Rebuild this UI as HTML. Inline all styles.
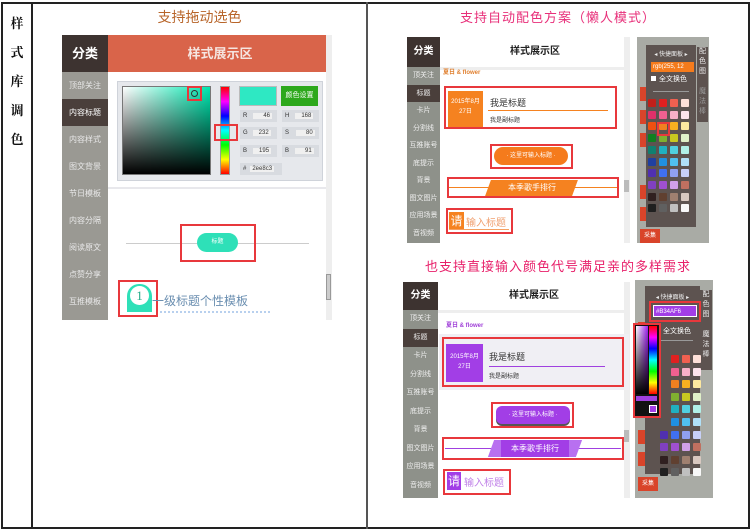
<!DOCTYPE html>
<html><head><meta charset="utf-8"><style>
*{margin:0;padding:0;box-sizing:border-box}
body{width:750px;height:530px;background:#fff;position:relative;overflow:hidden;font-family:"Liberation Sans","Noto Sans CJK SC",sans-serif;font-size:9px;color:#333}
.a{position:absolute}
.rb{position:absolute;border:2px solid #e8383c}
.side div{height:17.5px;line-height:17.5px;text-align:center;color:#eee;font-size:7px}
.g{position:absolute;width:8px;height:8px;border-radius:1px}
</style></head><body>
<!-- table borders -->
<div class="a" style="left:1px;top:2px;width:749px;height:527px;border:2px solid #222"></div>
<div class="a" style="left:31px;top:2px;width:2px;height:527px;background:#222"></div>
<div class="a" style="left:366px;top:2px;width:2px;height:527px;background:#555"></div>
<div class="a" style="left:9px;top:8px;width:16px;font-size:13px;font-weight:bold;line-height:29px;text-align:center;font-family:'Noto Serif CJK SC',serif;color:#111">样<br>式<br>库<br>调<br>色</div>

<div class="a" style="left:33px;top:7px;width:333px;text-align:center;font-size:14px;color:#b8652a">支持拖动选色</div>
<div class="a" style="left:368px;top:7px;width:380px;text-align:center;font-size:13px;color:#e8307a;letter-spacing:1px">支持自动配色方案（懒人模式）</div>
<div class="a" style="left:368px;top:256px;width:380px;text-align:center;font-size:13px;color:#e8206a;letter-spacing:1px">也支持直接输入颜色代号满足亲的多样需求</div>

<!-- LEFT SCREEN -->
<div class="a" style="left:62px;top:35px;width:270px;height:285px;background:#fff;overflow:hidden">
 <div class="a" style="left:0;top:0;width:46px;height:37px;background:#3d3330;color:#fff;font-size:13px;font-weight:bold;text-align:center;line-height:37px">分类</div>
 <div class="a" style="left:46px;top:0;width:224px;height:37px;background:#d9644a;color:#fbe;font-size:13px;font-weight:bold;text-align:center;line-height:37px;color:#f5e5e0">样式展示区</div>
 <div class="a" style="left:0;top:37px;width:46px;height:248px;background:#9a9993"></div>
 <div class="a" style="left:0;top:37px;width:46px;font-size:8px;color:#e8e8e8">
  <div style="height:27px;line-height:27px;text-align:center">顶部关注</div>
  <div style="height:27px;line-height:27px;text-align:center;background:#4a3f3b;color:#fff">内容标题</div>
  <div style="height:27px;line-height:27px;text-align:center">内容样式</div>
  <div style="height:27px;line-height:27px;text-align:center">图文背景</div>
  <div style="height:27px;line-height:27px;text-align:center">节日模板</div>
  <div style="height:27px;line-height:27px;text-align:center">内容分隔</div>
  <div style="height:27px;line-height:27px;text-align:center">阅读原文</div>
  <div style="height:27px;line-height:27px;text-align:center">点赞分享</div>
  <div style="height:27px;line-height:27px;text-align:center">互推模板</div>
 </div>
 <div class="a" style="left:55px;top:46px;width:206px;height:100px;background:#e6e8ec;border:1px solid #cfd3da"></div>
 <div class="a" style="left:60px;top:51px;width:89px;height:89px;background:linear-gradient(to top,#000,rgba(0,0,0,0)),linear-gradient(to right,#fff,#00e8b0);border:1px solid #777"></div>
 <div class="rb" style="left:125px;top:51px;width:15px;height:15px"></div>
 <div class="a" style="left:129px;top:55px;width:7px;height:7px;border:1px solid #333;border-radius:50%"></div>
 <div class="a" style="left:158px;top:51px;width:10px;height:89px;background:linear-gradient(#f00,#f0f,#00f,#0ff,#0f0,#ff0,#f00);border:1px solid #999"></div>
 <div class="rb" style="left:152px;top:89px;width:24px;height:17px"></div>
 <div class="a" style="left:177px;top:51px;width:38px;height:20px;background:#2ee8c3;border:1px solid #bbb"></div>
 <div class="a" style="left:219px;top:51px;width:37px;height:20px;background:#2da81c;color:#fff;font-size:7px;text-align:center;line-height:20px">颜色设置</div>
 <div class="a" style="left:178px;top:75px;width:37px;height:12px;background:#d8dbe0;font-size:6px;line-height:12px;padding-left:3px">R<span style="background:#f0f0f0;margin-left:6px;padding:0 2px 0 10px">46</span></div>
 <div class="a" style="left:220px;top:75px;width:37px;height:12px;background:#d8dbe0;font-size:6px;line-height:12px;padding-left:3px">H<span style="background:#f0f0f0;margin-left:6px;padding:0 2px 0 6px">168</span></div>
 <div class="a" style="left:178px;top:92px;width:37px;height:12px;background:#d8dbe0;font-size:6px;line-height:12px;padding-left:3px">G<span style="background:#f0f0f0;margin-left:5px;padding:0 2px 0 6px">232</span></div>
 <div class="a" style="left:220px;top:92px;width:37px;height:12px;background:#d8dbe0;font-size:6px;line-height:12px;padding-left:3px">S<span style="background:#f0f0f0;margin-left:7px;padding:0 2px 0 10px">80</span></div>
 <div class="a" style="left:178px;top:110px;width:37px;height:12px;background:#d8dbe0;font-size:6px;line-height:12px;padding-left:3px">B<span style="background:#f0f0f0;margin-left:6px;padding:0 2px 0 6px">195</span></div>
 <div class="a" style="left:220px;top:110px;width:37px;height:12px;background:#d8dbe0;font-size:6px;line-height:12px;padding-left:3px">B<span style="background:#f0f0f0;margin-left:6px;padding:0 2px 0 10px">91</span></div>
 <div class="a" style="left:178px;top:128px;width:42px;height:12px;background:#d8dbe0;font-size:6px;line-height:12px;padding-left:3px">#<span style="background:#f0f0f0;margin-left:4px;padding:0 2px">2ee8c3</span></div>
 <div class="a" style="left:46px;top:152px;width:224px;height:2px;background:#e8e8ec"></div>
 <div class="a" style="left:264px;top:0;width:6px;height:285px;background:#eee"></div>
 <div class="a" style="left:64px;top:208px;width:183px;height:1px;background:#ccc"></div>
 <div class="rb" style="left:118px;top:189px;width:76px;height:38px"></div>
 <div class="a" style="left:135px;top:198px;width:41px;height:19px;border-radius:10px;background:#2ee0b8;color:#fff;font-size:6px;text-align:center;line-height:19px">标题</div>
 <div class="a" style="left:264px;top:239px;width:5px;height:26px;background:#ccc;border:1px solid #999"></div>
 <div class="a" style="left:65px;top:249px;width:25px;height:28px;background:#2ee0b8;border-radius:12px 12px 0 0"></div>
 <div class="a" style="left:68px;top:251px;width:19px;height:19px;border-radius:50%;background:#fff;color:#2a8;font-size:13px;text-align:center;line-height:19px;font-family:'Liberation Serif',serif">1</div>
 <div class="rb" style="left:56px;top:245px;width:40px;height:37px"></div>
 <div class="a" style="left:90px;top:257px;font-size:12px;color:#6a8eb0">一级标题个性模板</div>
 <div class="a" style="left:98px;top:276px;width:110px;border-top:2px dotted #b8d0ee"></div>
</div>

<!-- RIGHT TOP SCREEN -->
<div class="a" style="left:407px;top:37px;width:223px;height:206px;background:#fff;overflow:hidden">
 <div class="a" style="left:0;top:0;width:33px;height:30px;background:#3d3330;color:#fff;font-weight:bold;font-size:10px;text-align:center;line-height:30px">分类</div>
 <div class="a" style="left:33px;top:0;width:190px;height:30px;background:#fff;font-weight:bold;font-size:10px;text-align:center;line-height:30px;color:#222">样式展示区</div>
 <div class="a" style="left:33px;top:30px;width:190px;height:3px;background:#eee"></div>
 <div class="a side" style="left:0;top:30px;width:33px;height:176px;background:#8e918a">
  <div>顶关注</div><div style="background:#4a3f3b">标题</div><div>卡片</div><div>分割线</div><div>互推账号</div><div>底提示</div><div>背景</div><div>图文图片</div><div>应用场景</div><div>音视频</div>
 </div>
 <div class="a" style="left:217px;top:0;width:6px;height:206px;background:#eee"></div>
 <div class="a" style="left:217px;top:143px;width:5px;height:12px;background:#bbb"></div>
 <div class="a" style="left:36px;top:30px;font-size:6px;color:#e08030;font-weight:bold">夏日 &amp; flower</div>
 <div class="rb" style="left:37px;top:49px;width:173px;height:43px"></div>
 <div class="a" style="left:41px;top:54px;width:35px;height:36px;background:#f58220;color:#fff;font-size:6px;text-align:center;padding-top:6px;line-height:10px">2015年8月<br>27日</div>
 <div class="a" style="left:83px;top:59px;font-size:9px">我是标题</div>
 <div class="a" style="left:81px;top:73px;width:120px;height:1px;background:#f58220"></div>
 <div class="a" style="left:83px;top:78px;font-size:6px">我是副标题</div>
 <div class="rb" style="left:83px;top:107px;width:83px;height:25px"></div>
 <div class="a" style="left:87px;top:110px;width:74px;height:18px;border-radius:9px;background:#f57b1c;color:#fff;font-size:6px;text-align:center;line-height:18px">· 这里可输入标题 ·</div>
 <div class="rb" style="left:40px;top:140px;width:172px;height:21px"></div>
 <div class="a" style="left:42px;top:150px;width:168px;height:1px;background:#f58220"></div>
 <div class="a" style="left:81px;top:143px;width:87px;height:16px;background:#f58220;transform:skewX(-20deg)"></div>
 <div class="a" style="left:92px;top:143px;width:66px;height:16px;color:#fff;font-size:8px;text-align:center;line-height:16px">本季歌手排行</div>
 <div class="rb" style="left:39px;top:171px;width:67px;height:26px"></div>
 <div class="a" style="left:42px;top:175px;width:15px;height:18px;background:#f58220;color:#fff;font-size:12px;line-height:18px;text-align:center">请</div>
 <div class="a" style="left:59px;top:177px;font-size:10px;color:#f0a070">输入标题</div>
 <div class="a" style="left:42px;top:192px;width:60px;height:1px;background:#f5a060"></div>
</div>
<!-- right top panel -->
<div class="a" style="left:637px;top:37px;width:72px;height:206px;background:#a9aba5">
 <div class="a" style="left:3px;top:50px;width:20px;height:14px;background:#d9442a"></div>
 <div class="a" style="left:3px;top:73px;width:20px;height:14px;background:#d9442a"></div>
 <div class="a" style="left:3px;top:96px;width:20px;height:14px;background:#d9442a"></div>
 <div class="a" style="left:3px;top:148px;width:20px;height:14px;background:#d9442a"></div>
 <div class="a" style="left:3px;top:170px;width:20px;height:14px;background:#d9442a"></div>
 <div class="a" style="left:3px;top:192px;width:20px;height:14px;background:#d9442a;color:#fff;font-size:6px;line-height:14px;text-align:center">采集</div>
 <div class="a" style="left:9px;top:8px;width:50px;height:182px;background:#5d5350"></div>
 <div class="a" style="left:60px;top:10px;width:11px;height:75px;background:#5d5350;color:#eee;font-size:7px;line-height:10px;text-align:center">配<br>色<br>图<br><br><span style="color:#999">魔<br>法<br>棒</span></div>
 <div class="a" style="left:9px;top:12px;width:50px;font-size:6px;color:#eee;text-align:center">◂ 快捷面板 ▸</div>
 <div class="a" style="left:14px;top:25px;width:43px;height:10px;background:#f57b1c;color:#fff;font-size:6px;line-height:10px;padding-left:2px">rgb(255, 12</div>
 <div class="a" style="left:14px;top:39px;width:5px;height:5px;background:#fff"></div>
 <div class="a" style="left:22px;top:37px;font-size:7px;color:#fff">全文换色</div>
 <div class="a" style="left:16px;top:54px;width:36px;height:1px;background:#999"></div>
</div>
<!-- right bottom screen -->
<div class="a" style="left:403px;top:282px;width:227px;height:216px;background:#fff;overflow:hidden">
 <div class="a" style="left:0;top:0;width:35px;height:28px;background:#3d3330;color:#fff;font-weight:bold;font-size:10px;text-align:center;line-height:28px">分类</div>
 <div class="a" style="left:35px;top:0;width:192px;height:28px;font-weight:bold;font-size:10px;text-align:center;line-height:28px;color:#222">样式展示区</div>
 <div class="a" style="left:35px;top:28px;width:192px;height:3px;background:#eee"></div>
 <div class="a side" style="left:0;top:28px;width:35px;height:188px;background:#8e918a">
  <div style="height:18.5px;line-height:18.5px">顶关注</div><div style="height:18.5px;line-height:18.5px;background:#4a3f3b">标题</div><div style="height:18.5px;line-height:18.5px">卡片</div><div style="height:18.5px;line-height:18.5px">分割线</div><div style="height:18.5px;line-height:18.5px">互推账号</div><div style="height:18.5px;line-height:18.5px">底提示</div><div style="height:18.5px;line-height:18.5px">背景</div><div style="height:18.5px;line-height:18.5px">图文图片</div><div style="height:18.5px;line-height:18.5px">应用场景</div><div style="height:18.5px;line-height:18.5px">音视频</div>
 </div>
 <div class="a" style="left:221px;top:0;width:6px;height:216px;background:#eee"></div>
 <div class="a" style="left:221px;top:148px;width:5px;height:12px;background:#bbb"></div>
 <div class="a" style="left:43px;top:38px;font-size:6px;color:#a040d8;font-weight:bold">夏日 &amp; flower</div>
 <div class="a" style="left:36px;top:52px;width:190px;height:56px;background:#f0eff4"></div>
 <div class="rb" style="left:39px;top:55px;width:182px;height:50px"></div>
 <div class="a" style="left:43px;top:62px;width:37px;height:38px;background:#a23ee6;color:#fff;font-size:6px;text-align:center;padding-top:8px;line-height:10px">2015年8月<br>27日</div>
 <div class="a" style="left:86px;top:68px;font-size:9px">我是标题</div>
 <div class="a" style="left:86px;top:84px;width:116px;height:1px;background:#a040e0"></div>
 <div class="a" style="left:86px;top:89px;font-size:6px">我是副标题</div>
 <div class="rb" style="left:88px;top:120px;width:83px;height:26px"></div>
 <div class="a" style="left:93px;top:124px;width:74px;height:18px;border-radius:6px;background:#a23ee6;color:#fff;font-size:6px;text-align:center;line-height:18px;box-shadow:0 2px 0 #555">· 这里可输入标题 ·</div>
 <div class="rb" style="left:39px;top:155px;width:182px;height:23px"></div>
 <div class="a" style="left:42px;top:166px;width:176px;height:1px;background:#a040e0"></div>
 <div class="a" style="left:88px;top:158px;width:88px;height:17px;background:#b870f0;transform:skewX(-20deg)"></div>
 <div class="a" style="left:98px;top:158px;width:68px;height:17px;background:#a23ee6;color:#fff;font-size:8px;text-align:center;line-height:17px">本季歌手排行</div>
 <div class="rb" style="left:40px;top:187px;width:68px;height:26px"></div>
 <div class="a" style="left:44px;top:190px;width:14px;height:18px;background:#a23ee6;color:#fff;font-size:12px;line-height:18px;text-align:center">请</div>
 <div class="a" style="left:61px;top:192px;font-size:10px;color:#c080e8">输入标题</div>
</div>
<!-- right bottom panel -->
<div class="a" style="left:635px;top:280px;width:78px;height:218px;background:#a9aba5">
 <div class="a" style="left:3px;top:42px;width:20px;height:14px;background:#d9442a"></div>
 <div class="a" style="left:3px;top:150px;width:20px;height:14px;background:#d9442a"></div>
 <div class="a" style="left:3px;top:172px;width:20px;height:14px;background:#d9442a"></div>
 <div class="a" style="left:3px;top:197px;width:20px;height:14px;background:#d9442a;color:#fff;font-size:6px;line-height:14px;text-align:center">采集</div>
 <div class="a" style="left:10px;top:6px;width:55px;height:188px;background:#5d5350"></div>
 <div class="a" style="left:65px;top:10px;width:12px;height:80px;background:#5d5350;color:#eee;font-size:7px;line-height:10px;text-align:center">配<br>色<br>图<br><br>魔<br>法<br>棒</div>
 <div class="a" style="left:10px;top:12px;width:55px;font-size:6px;color:#eee;text-align:center">◂ 快捷面板 ▸</div>
 <div class="rb" style="left:14px;top:21px;width:52px;height:21px"></div>
 <div class="a" style="left:18px;top:25px;width:44px;height:12px;background:#a23ee6;color:#fff;font-size:6px;line-height:12px;padding-left:2px;border:1px solid #fff">#B34AF6</div>
 <div class="a" style="left:28px;top:46px;font-size:7px;color:#fff">全文换色</div>
 <div class="a" style="left:22px;top:60px;width:36px;height:1px;background:#999"></div>
 <div class="a" style="left:-2px;top:43px;width:28px;height:95px;background:#111;border:2px solid #e8383c"></div>
 <div class="a" style="left:1px;top:46px;width:12px;height:68px;background:linear-gradient(to bottom,rgba(0,0,0,0),#000),linear-gradient(to right,#fff,#a020f0)"></div>
 <div class="a" style="left:14px;top:46px;width:8px;height:68px;background:linear-gradient(#f00,#f0f,#00f,#0ff,#0f0,#ff0,#f00)"></div>
 <div class="a" style="left:1px;top:116px;width:21px;height:5px;background:#a040e0"></div>
 <div class="a" style="left:14px;top:125px;width:8px;height:8px;background:#a23ee6;border:1px solid #fff"></div>
</div>
<div id="grids"></div>
<script>
var c=[["#c0201a","#e02020","#f06050","#fde0d8"],["#e0306a","#f06090","#f8b0c8","#fde4ec"],["#f05010","#f08020","#f8b020","#fde8a0"],["#108020","#80b030","#c8c820","#e0f0c8"],["#108070","#20b0c0","#50d0e0","#b0f0e8"],["#2040a0","#2090e0","#50c0f0","#b0e0f8"],["#5030b0","#4070f0","#90a0f0","#c8d0f8"],["#8040c0","#a050d0","#d0a0e8","#c07060"],["#302020","#604030","#a08070","#d8c8c0"],["#202020","#606060","#c0c0c0","#f8f8f8"]];
var h="";
function grid(x,y,dx,dy,skip){for(var r=0;r<10;r++)for(var k=0;k<4;k++){if(skip&&k==0&&r<6)continue;h+='<div class="g" style="left:'+(x+k*dx)+'px;top:'+(y+r*dy)+'px;background:'+c[r][k]+'"></div>';}}
grid(648,99,11,11.7,false);
grid(660,355,11,12.6,true);
h+='<div class="rb" style="left:657px;top:122px;width:13px;height:14px"></div>';
document.getElementById("grids").innerHTML=h;
</script>
</body></html>
